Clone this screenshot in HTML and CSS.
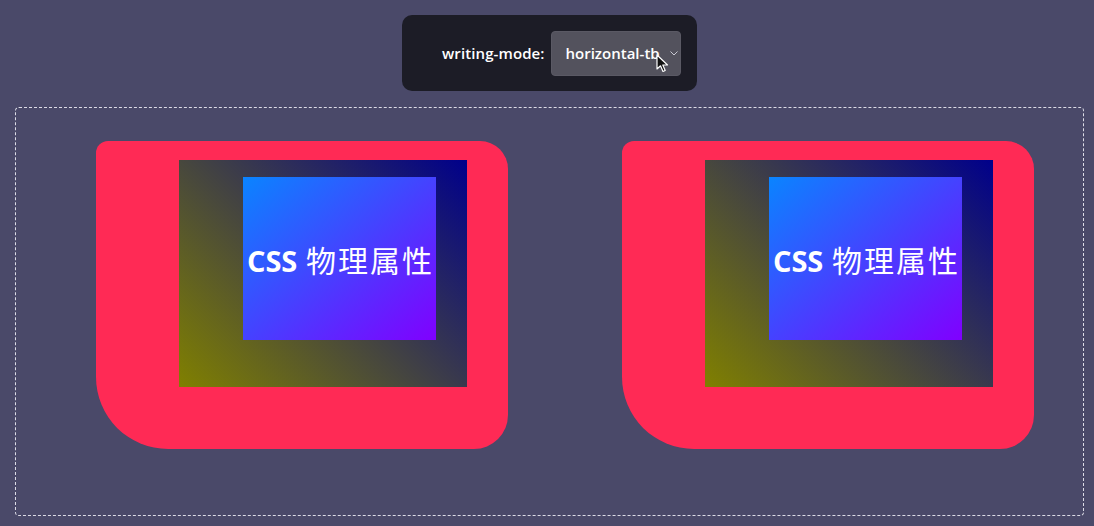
FILE: index.html
```html
<!DOCTYPE html>
<html lang="zh">
<head>
<meta charset="utf-8">
<link rel="stylesheet" href="styles.css">
</head>
<body>
  <div class="toolbar">
    <span class="label">writing-mode:</span>
    <div class="select">
      <span class="value">horizontal-tb</span>
      <svg class="chev" width="8" height="5" viewBox="0 0 8 5"><path d="M0.5 0.5 L4 4 L7.5 0.5" fill="none" stroke="#c9c9d2" stroke-width="1"/></svg>
      <svg class="cursor" width="13" height="19" viewBox="0 0 13 19"><path d="M1 1 L1 15 L4.5 11.8 L7 17.5 L9.2 16.5 L6.8 11 L11.5 11 Z" fill="#111" stroke="#fff" stroke-width="1.2" stroke-linejoin="round"/></svg>
    </div>
  </div>
  <div class="stage">
    <div class="card">
      <div class="outer">
        <div class="inner"><span class="txt"><b>CSS</b> 物理属性</span></div>
      </div>
    </div>
    <div class="card">
      <div class="outer">
        <div class="inner"><span class="txt"><b>CSS</b> 物理属性</span></div>
      </div>
    </div>
  </div>
</body>
</html>
```

FILE: styles.css
```css
html, body {
  margin: 0;
  padding: 0;
}
body {
  background: #4a4969;
  width: 1094px;
  height: 526px;
  overflow: hidden;
  font-family: "Open Sans", "Noto Sans CJK SC", sans-serif;
}
.toolbar {
  box-sizing: border-box;
  width: 295px;
  height: 76px;
  margin: 15px 0 0 402px;
  background: #1c1c26;
  border-radius: 10px;
  display: flex;
  align-items: center;
  padding-left: 40px;
  gap: 6px;
}
.label {
  color: #fff;
  font-weight: 600;
  font-size: 15px;
  letter-spacing: 0.1px;
}
.select {
  position: relative;
  box-sizing: border-box;
  width: 130px;
  height: 45px;
  background: #53525d;
  border: 1px solid #5a5964;
  border-radius: 4px;
  display: flex;
  align-items: center;
  padding-left: 14px;
}
.value {
  color: #fff;
  font-weight: 600;
  font-size: 15px;
  width: 96px;
  overflow: hidden;
  white-space: nowrap;
}
.chev {
  margin-left: 8px;
}
.cursor {
  position: absolute;
  left: 104px;
  top: 22px;
}
.stage {
  box-sizing: border-box;
  width: 1069px;
  height: 409px;
  margin: 16px 0 0 15px;
  border: 1px dashed #dcdce6;
  border-radius: 4px;
  display: flex;
  gap: 114px;
  padding: 33px 0 0 80px;
}
.card {
  box-sizing: border-box;
  width: 412px;
  height: 308px;
  background: #ff2a55;
  border-radius: 12px 28px 34px 72px;
  padding: 19px 41px 0 83px;
}
.outer {
  box-sizing: border-box;
  width: 288px;
  height: 227px;
  background: linear-gradient(45deg, #808000, #00008b);
  padding: 17px 0 0 64px;
}
.inner {
  width: 193px;
  height: 163px;
  background: linear-gradient(to bottom right, #0a84ff, #8000ff);
  display: flex;
  align-items: center;
  justify-content: center;
}
.txt {
  color: #fff;
  font-size: 30px;
  white-space: nowrap;
  font-family: "Noto Sans CJK SC", sans-serif;
  letter-spacing: 2px;
  margin-left: 2px;
}
.txt b {
  font-family: "Open Sans", sans-serif;
  font-weight: 700;
  font-size: 29px;
  letter-spacing: 0;
}
```
